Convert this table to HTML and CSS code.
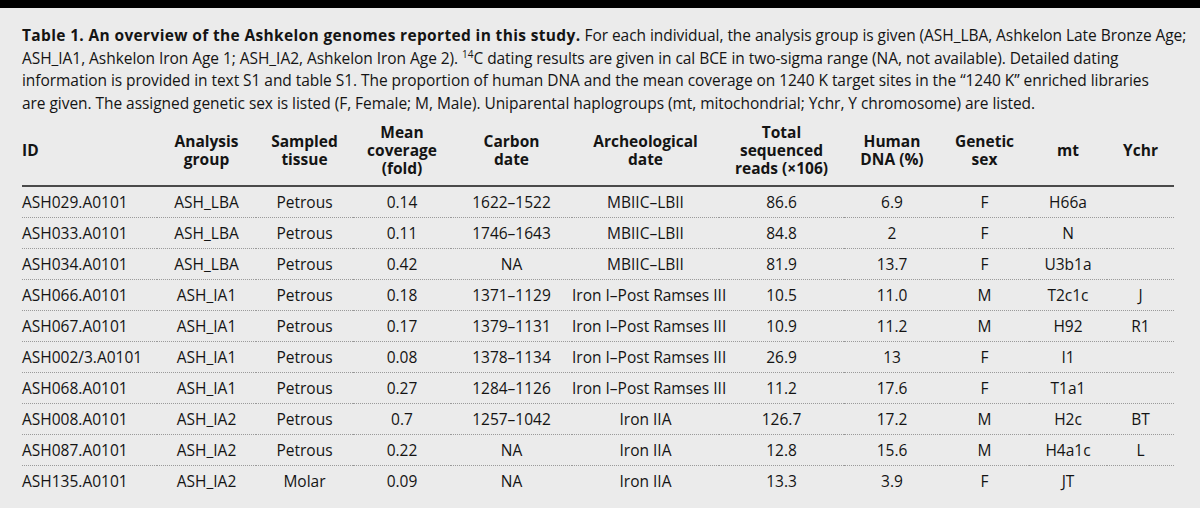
FILE: index.html
```html
<!DOCTYPE html>
<html>
<head>
<meta charset="utf-8">
<link rel="stylesheet" href="styles.css">
</head>
<body>
<div class="topbar"></div>
<div class="panel">
  <p class="caption"><b>Table 1. An overview of the Ashkelon genomes reported in this study.</b> For each individual, the analysis group is given (ASH_LBA, Ashkelon Late Bronze Age;<br>ASH_IA1, Ashkelon Iron Age 1; ASH_IA2, Ashkelon Iron Age 2). <sup>14</sup>C dating results are given in cal BCE in two-sigma range (NA, not available). Detailed dating<br>information is provided in text S1 and table S1. The proportion of human DNA and the mean coverage on 1240 K target sites in the “1240 K” enriched libraries<br>are given. The assigned genetic sex is listed (F, Female; M, Male). Uniparental haplogroups (mt, mitochondrial; Ychr, Y chromosome) are listed.</p>
  <table class="data">
    <colgroup>
      <col class="c-id"><col class="c-grp"><col class="c-tis"><col class="c-cov"><col class="c-carb"><col class="c-arch"><col class="c-tot"><col class="c-hum"><col class="c-sex"><col class="c-mt"><col class="c-y">
    </colgroup>
    <thead>
      <tr>
        <th class="left">ID</th>
        <th>Analysis<br>group</th>
        <th>Sampled<br>tissue</th>
        <th>Mean<br>coverage<br>(fold)</th>
        <th>Carbon<br>date</th>
        <th>Archeological<br>date</th>
        <th>Total<br>sequenced<br>reads (×106)</th>
        <th>Human<br>DNA (%)</th>
        <th>Genetic<br>sex</th>
        <th>mt</th>
        <th>Ychr</th>
      </tr>
    </thead>
    <tbody>
      <tr><td class="left">ASH029.A0101</td><td>ASH_LBA</td><td>Petrous</td><td>0.14</td><td>1622–1522</td><td>MBIIC–LBII</td><td>86.6</td><td>6.9</td><td>F</td><td>H66a</td><td></td></tr>
      <tr><td class="left">ASH033.A0101</td><td>ASH_LBA</td><td>Petrous</td><td>0.11</td><td>1746–1643</td><td>MBIIC–LBII</td><td>84.8</td><td>2</td><td>F</td><td>N</td><td></td></tr>
      <tr><td class="left">ASH034.A0101</td><td>ASH_LBA</td><td>Petrous</td><td>0.42</td><td>NA</td><td>MBIIC–LBII</td><td>81.9</td><td>13.7</td><td>F</td><td>U3b1a</td><td></td></tr>
      <tr><td class="left">ASH066.A0101</td><td>ASH_IA1</td><td>Petrous</td><td>0.18</td><td>1371–1129</td><td>Iron I–Post Ramses III</td><td>10.5</td><td>11.0</td><td>M</td><td>T2c1c</td><td>J</td></tr>
      <tr><td class="left">ASH067.A0101</td><td>ASH_IA1</td><td>Petrous</td><td>0.17</td><td>1379–1131</td><td>Iron I–Post Ramses III</td><td>10.9</td><td>11.2</td><td>M</td><td>H92</td><td>R1</td></tr>
      <tr><td class="left">ASH002/3.A0101</td><td>ASH_IA1</td><td>Petrous</td><td>0.08</td><td>1378–1134</td><td>Iron I–Post Ramses III</td><td>26.9</td><td>13</td><td>F</td><td>I1</td><td></td></tr>
      <tr><td class="left">ASH068.A0101</td><td>ASH_IA1</td><td>Petrous</td><td>0.27</td><td>1284–1126</td><td>Iron I–Post Ramses III</td><td>11.2</td><td>17.6</td><td>F</td><td>T1a1</td><td></td></tr>
      <tr><td class="left">ASH008.A0101</td><td>ASH_IA2</td><td>Petrous</td><td>0.7</td><td>1257–1042</td><td>Iron IIA</td><td>126.7</td><td>17.2</td><td>M</td><td>H2c</td><td>BT</td></tr>
      <tr><td class="left">ASH087.A0101</td><td>ASH_IA2</td><td>Petrous</td><td>0.22</td><td>NA</td><td>Iron IIA</td><td>12.8</td><td>15.6</td><td>M</td><td>H4a1c</td><td>L</td></tr>
      <tr><td class="left">ASH135.A0101</td><td>ASH_IA2</td><td>Molar</td><td>0.09</td><td>NA</td><td>Iron IIA</td><td>13.3</td><td>3.9</td><td>F</td><td>JT</td><td></td></tr>
    </tbody>
  </table>
</div>
</body>
</html>
```

FILE: styles.css
```css
html, body {
  margin: 0;
  padding: 0;
  background: #ffffff;
}
body {
  font-family: "Open Sans", "Noto Sans", "Liberation Sans", sans-serif;
  color: #141414;
}
.topbar {
  height: 8px;
  background: #000000;
}
.panel {
  background: #ebebeb;
  height: 500px;
  padding: 0 20px 0 22px;
  box-sizing: border-box;
  overflow: hidden;
}
.caption {
  margin: 0;
  padding-top: 16px;
  font-size: 15.5px;
  line-height: 22.7px;
  letter-spacing: -0.05px;
  white-space: nowrap;
}
.caption b {
  font-weight: 700;
  letter-spacing: 0.35px;
}
.caption sup {
  font-size: 10px;
  line-height: 0;
  vertical-align: 6px;
}
.data {
  width: 1152px;
  table-layout: fixed;
  border-collapse: collapse;
  font-size: 15.5px;
}
.c-id { width: 135px; }
.c-grp { width: 99px; }
.c-tis { width: 97px; }
.c-cov { width: 98px; }
.c-carb { width: 121px; }
.c-arch { width: 147px; }
.c-tot { width: 125px; }
.c-hum { width: 96px; }
.c-sex { width: 89px; }
.c-mt { width: 78px; }
.c-y { width: 67px; }
.data th {
  font-weight: 700;
  line-height: 18px;
  padding: 8px 0 8px;
  text-align: center;
  vertical-align: middle;
  white-space: nowrap;
  border-bottom: 2px solid #4a4a4a;
}
.data td {
  height: 30px;
  padding: 0;
  text-align: center;
  vertical-align: middle;
  white-space: nowrap;
  border-bottom: 1px dotted #9a9a9a;
}
.data tbody tr:last-child td {
  border-bottom: none;
}
.data .left {
  text-align: left;
}
```
